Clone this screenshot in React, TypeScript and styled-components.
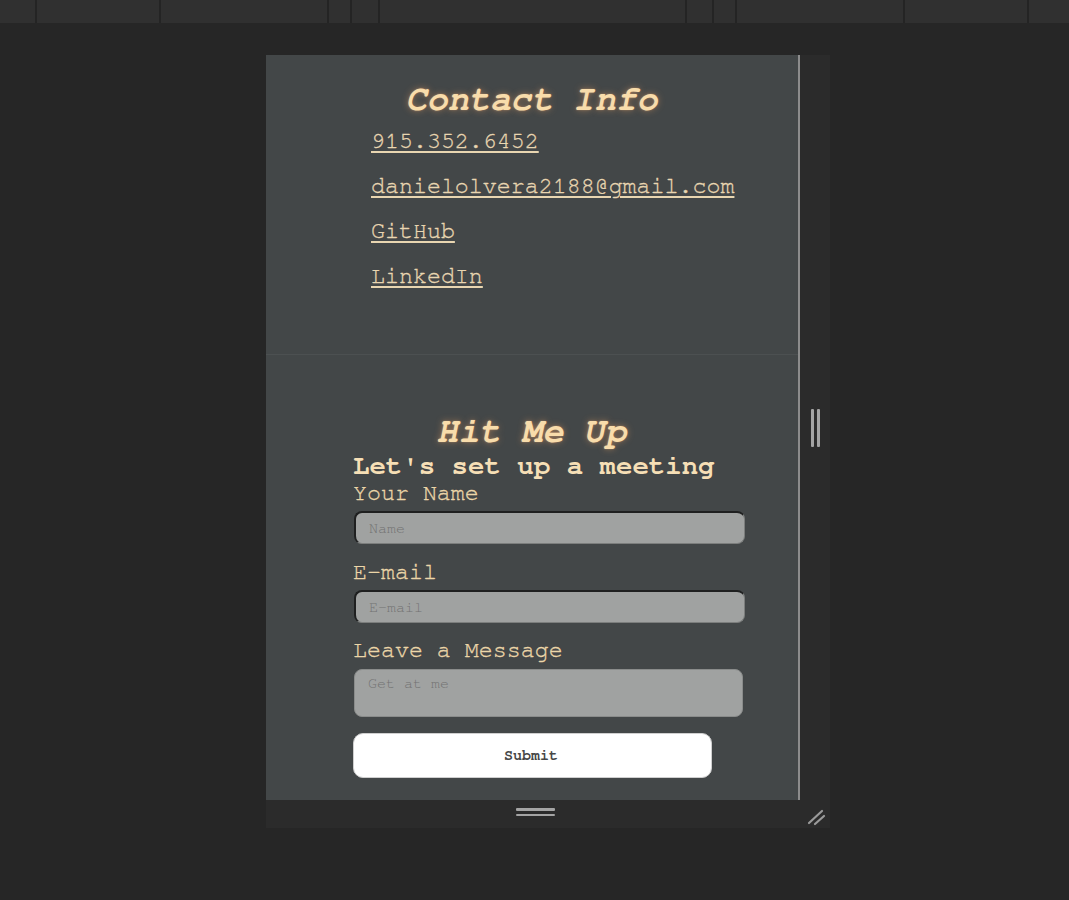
import React from "react";
import styled, { createGlobalStyle } from "styled-components";

const mono = `"Nimbus Mono PS", "Nimbus Mono L", "FreeMono", "Courier New", "Liberation Mono", monospace`;

const Global = createGlobalStyle`
  html, body { margin: 0; padding: 0; background: #262626; }
  body { font-family: ${mono}; }
  * { box-sizing: border-box; }
`;

const TopBar = styled.div`
  display: flex;
  height: 23px;
  background: #303030;
`;

const Segment = styled.div<{ $w: number }>`
  width: ${(p) => p.$w}px;
  flex: 0 0 auto;
  height: 100%;
  border-right: 2px solid #242424;
  &:last-child { border-right: none; flex: 1 1 auto; }
`;

const Stage = styled.div`
  padding: 32px 0 0 266px;
`;

const Frame = styled.div`
  display: grid;
  grid-template-columns: 534px 30px;
  grid-template-rows: 745px 28px;
  width: 564px;
`;

const Panel = styled.div`
  background: #434748;
  border-right: 2px solid #8c8c8c;
  display: flex;
  flex-direction: column;
  overflow: hidden;
`;

const RightStrip = styled.div`
  background: #2b2b2b;
  display: flex;
  align-items: center;
  justify-content: center;
  gap: 3px;
  padding-left: 1px;
`;

const VBar = styled.div`
  width: 3px;
  height: 38px;
  border-radius: 1px;
  background: #a4a4a4;
`;

const BottomStrip = styled.div`
  background: #2b2b2b;
  display: flex;
  flex-direction: column;
  align-items: center;
  justify-content: center;
  gap: 3px;
  padding: 0 0 4px 4px;
`;

const HBar = styled.div`
  width: 39px;
  height: 2.5px;
  border-radius: 1px;
  background: #a4a4a4;
`;

const Corner = styled.div`
  background: #2b2b2b;
  display: flex;
  align-items: flex-start;
  justify-content: flex-start;
  padding: 6px 0 0 7px;
`;

const ContactSection = styled.section`
  height: 300px;
  padding-top: 26px;
  border-bottom: 1px solid #4c5051;
  display: flex;
  flex-direction: column;
`;

const glow = `0 0 7px rgba(255, 170, 105, 0.45), 0 0 2px rgba(255, 190, 130, 0.4)`;

const Title = styled.h2`
  margin: 0;
  font-family: ${mono};
  font-size: 35px;
  line-height: 38px;
  font-weight: bold;
  font-style: italic;
  color: #f8dcab;
  text-align: center;
  text-shadow: ${glow};
`;

const LinkList = styled.div`
  display: flex;
  flex-direction: column;
  align-items: flex-start;
  padding-left: 105px;
`;

const ContactLink = styled.a`
  font-size: 23.3px;
  line-height: 45px;
  color: #e9d6b1;
  -webkit-text-stroke: 0.3px #e9d6b1;
  text-decoration: underline;
  text-underline-offset: 3px;
  text-decoration-thickness: 2px;
  cursor: pointer;
`;

const FormSection = styled.section`
  flex: 1;
  padding-top: 58px;
  display: flex;
  flex-direction: column;
`;

const Form = styled.form`
  display: flex;
  flex-direction: column;
  width: 392px;
  margin-left: 87px;
`;

const Subtitle = styled.h3`
  margin: 0;
  font-size: 27.4px;
  line-height: 30px;
  font-weight: bold;
  color: #f6dfb6;
`;

const Label = styled.label<{ $gap: number }>`
  margin-top: ${(p) => p.$gap}px;
  font-size: 23.3px;
  line-height: 26px;
  color: #ecd6a8;
  -webkit-text-stroke: 0.3px #ecd6a8;
`;

const fieldCss = `
  width: 391px;
  margin-top: 5px;
  margin-left: 1px;
  background: #a0a2a1;
  border: 1px solid #7c7e7d;
  border-top: 2px solid #1f2020;
  border-left: 2px solid #1f2020;
  border-radius: 8px;
  font-family: ${mono};
  font-size: 15px;
  color: #333;
  padding: 0 13px;
  outline: none;
  &::placeholder { color: #727272; }
`;

const Input = styled.input`
  ${fieldCss}
  height: 33px;
`;

const TextArea = styled.textarea`
  ${fieldCss}
  width: 389px;
  height: 48px;
  margin-top: 6px;
  border: 1px solid #8a8c8b;
  padding-top: 6px;
  resize: none;
`;

const Submit = styled.button`
  margin-top: 16px;
  width: 359px;
  height: 45px;
  background: #ffffff;
  border: 1px solid #cfcfcf;
  border-radius: 10px;
  font-family: ${mono};
  font-weight: bold;
  font-size: 15px;
  color: #474747;
  padding-left: 3px;
  cursor: pointer;
`;

const segments = [37, 124, 168, 23, 28, 307, 27, 23, 168, 124, 40];

export default function App() {
  return (
    <>
      <Global />
      <TopBar>
        {segments.map((w, i) => (
          <Segment key={i} $w={w} />
        ))}
      </TopBar>
      <Stage>
        <Frame>
          <Panel>
            <ContactSection>
              <Title>Contact Info</Title>
              <LinkList>
                <ContactLink>915.352.6452</ContactLink>
                <ContactLink>danielolvera2188@gmail.com</ContactLink>
                <ContactLink>GitHub</ContactLink>
                <ContactLink>LinkedIn</ContactLink>
              </LinkList>
            </ContactSection>
            <FormSection>
              <Title>Hit Me Up</Title>
              <Form onSubmit={(e) => e.preventDefault()}>
                <Subtitle>Let's set up a meeting</Subtitle>
                <Label $gap={-1}>Your Name</Label>
                <Input placeholder="Name" />
                <Label $gap={15}>E-mail</Label>
                <Input placeholder="E-mail" />
                <Label $gap={14}>Leave a Message</Label>
                <TextArea placeholder="Get at me" />
                <Submit type="submit">Submit</Submit>
              </Form>
            </FormSection>
          </Panel>
          <RightStrip>
            <VBar />
            <VBar />
          </RightStrip>
          <BottomStrip>
            <HBar />
            <HBar />
          </BottomStrip>
          <Corner>
            <svg width="20" height="20" viewBox="0 0 20 20">
              <path d="M2 17 L15 5 M8 18 L17 10" stroke="#9a9a9a" strokeWidth="2.2" strokeLinecap="round" fill="none" />
            </svg>
          </Corner>
        </Frame>
      </Stage>
    </>
  );
}
